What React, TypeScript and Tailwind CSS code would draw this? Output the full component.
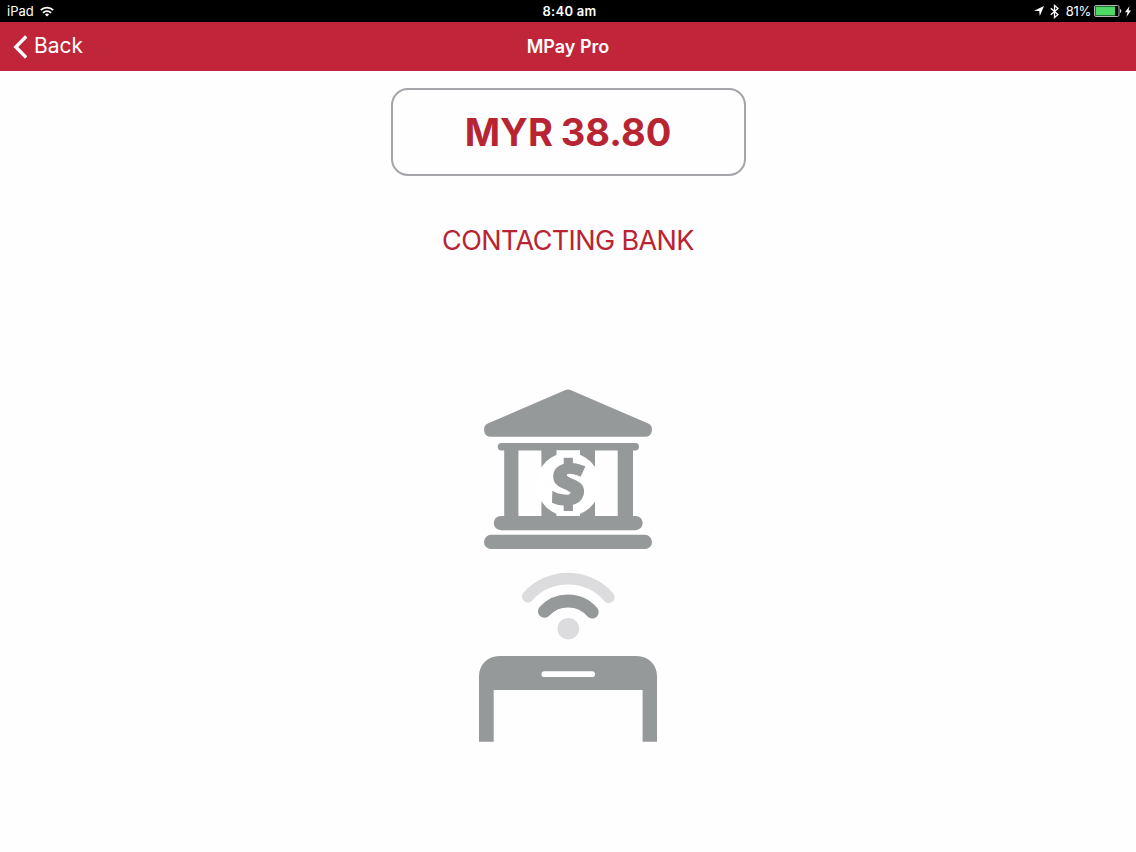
function WifiIcon() {
  return (
    <svg width="14" height="11" viewBox="0 0 14 11" fill="none" stroke="#fff" strokeWidth="1.9">
      <path d="M0.8 4.2A8.8 8.8 0 0 1 13.2 4.2" />
      <path d="M3 6.8A5.6 5.6 0 0 1 11 6.8" />
      <path d="M7 10.6L4.9 8.5A3 3 0 0 1 9.1 8.5Z" fill="#fff" stroke="none" />
    </svg>
  );
}

function StatusBar() {
  return (
    <div className="flex h-[22px] items-center bg-black text-[13px] leading-none text-white">
      <div className="flex flex-1 items-center gap-[6px] pl-[7px]">
        <span>iPad</span>
        <WifiIcon />
      </div>
      <div className="pl-px font-semibold tracking-[0.3px]">8:40 am</div>
      <div className="flex flex-1 items-center justify-end pr-[5px]">
        <svg className="mr-[6px]" width="10" height="10" viewBox="0 0 10 10" fill="#fff">
          <path d="M10 0L5.8 10L5.2 5L0 4.7Z" />
        </svg>
        <svg
          className="mr-[7px]"
          width="9"
          height="15"
          viewBox="0 0 9 15"
          fill="none"
          stroke="#fff"
          strokeWidth="1.3"
        >
          <path d="M0.8 4.2L8 10.6L4.5 13.6V1.4L8 4.4L0.8 10.8" />
        </svg>
        <span className="mr-[3px] tracking-[-0.3px]">81%</span>
        <svg className="mr-[3px]" width="28" height="12" viewBox="0 0 28 12">
          <rect x="0.5" y="0.5" width="24.5" height="11" rx="1.5" fill="none" stroke="#b5b5b5" />
          <rect x="1.5" y="1.5" width="19.5" height="9" fill="#4cd964" />
          <path d="M26 4V8A2.2 2.2 0 0 0 26 4Z" fill="#e5e5e5" />
        </svg>
        <svg width="6" height="11" viewBox="0 0 6 11" fill="#fff">
          <path d="M4.6 0L0 6.2H2.5L1.4 11L6 4.5H3.5Z" />
        </svg>
      </div>
    </div>
  );
}

function NavBar() {
  return (
    <header className="flex h-[49px] items-center bg-[#c1253a] px-[13px] text-white">
      <div className="flex-1">
        <button type="button" className="flex items-center gap-[7px]">
          <svg width="14" height="24" viewBox="0 0 14 24" fill="none" stroke="#fff" strokeWidth="3.4">
            <path d="M13.2 1.4L2.8 12L13.2 22.6" />
          </svg>
          <span className="relative -top-px text-[21px] leading-none">Back</span>
        </button>
      </div>
      <h1 className="text-[18px] font-semibold leading-none">MPay Pro</h1>
      <div className="flex-1" />
    </header>
  );
}

function BankIcon() {
  return (
    <svg width="168" height="160" viewBox="0 0 168 160" fill="#96999a">
      <path d="M81.5 1.1Q84 -0.2 86.5 1.1L163.7 34.2A7.1 7.1 0 0 1 160.9 47.8H7.1A7.1 7.1 0 0 1 4.3 34.2Z" />
      <rect x="13.7" y="54" width="141.3" height="7.4" rx="3.7" />
      <rect x="20.2" y="58" width="14.2" height="72" />
      <rect x="57.4" y="58" width="15.3" height="72" />
      <rect x="96" y="58" width="15" height="72" />
      <rect x="133.7" y="58" width="15.3" height="72" />
      <circle cx="84.3" cy="95.3" r="31.8" fill="#fff" />
      <rect x="72.7" y="61.4" width="23.3" height="66" fill="#fff" />
      <rect x="9.7" y="127" width="149" height="14.2" rx="7.1" />
      <rect x="0" y="145.8" width="168" height="14.2" rx="7.1" />
      {/* dollar sign: the bar only shows above and below the S */}
      <rect x="79.7" y="68.8" width="9.2" height="10" />
      <rect x="79.7" y="112" width="9.2" height="10" />
      <text
        x="84.3"
        y="115.3"
        textAnchor="middle"
        stroke="#96999a"
        strokeWidth="2.2"
        transform="translate(84.3 95.3) skewX(-2) scale(1.07 1) translate(-84.3 -95.3)"
        className="font-['Open_Sans'] text-[55px] font-extrabold"
      >
        S
      </text>
    </svg>
  );
}

function SignalIcon() {
  return (
    <svg width="96" height="68" viewBox="0 0 96 68" fill="none" strokeLinecap="round">
      <path d="M7.9 24.5A54 54 0 0 1 88.7 25.1" stroke="#dcdbde" strokeWidth="11.8" />
      <path d="M24.4 39.3A32 32 0 0 1 72.2 40" stroke="#96999a" strokeWidth="13" />
      <circle cx="48.3" cy="56.7" r="10.8" fill="#dcdbde" />
    </svg>
  );
}

function PhoneIcon() {
  return (
    <svg width="178" height="86" viewBox="0 0 178 86">
      <path d="M0 85.7V20A20 20 0 0 1 20 0H158A20 20 0 0 1 178 20V85.7H163.6V34H14.7V85.7Z" fill="#96999a" />
      <rect x="62.5" y="15.3" width="53.5" height="5.8" rx="2.9" fill="#fff" />
    </svg>
  );
}

export default function App() {
  return (
    <div className="flex h-[852px] w-[1136px] flex-col overflow-hidden bg-[#fefefe] font-['Inter',sans-serif]">
      <StatusBar />
      <NavBar />
      <main className="flex flex-col items-center pt-[17px]">
        <div className="flex h-[88px] w-[355px] items-center justify-center rounded-[17px] border-2 border-[#a5a4a8] text-[38px] font-bold leading-none text-[#b92433] [word-spacing:-1px]">
          MYR 38.80
        </div>
        <p className="mt-[49px] text-[27px] leading-[32px] tracking-[-0.6px] text-[#b92433]">CONTACTING BANK</p>
        <div className="mt-[132px] flex flex-col items-center">
          <BankIcon />
          <div className="mt-[23px]">
            <SignalIcon />
          </div>
          <div className="mt-[16px]">
            <PhoneIcon />
          </div>
        </div>
      </main>
    </div>
  );
}
